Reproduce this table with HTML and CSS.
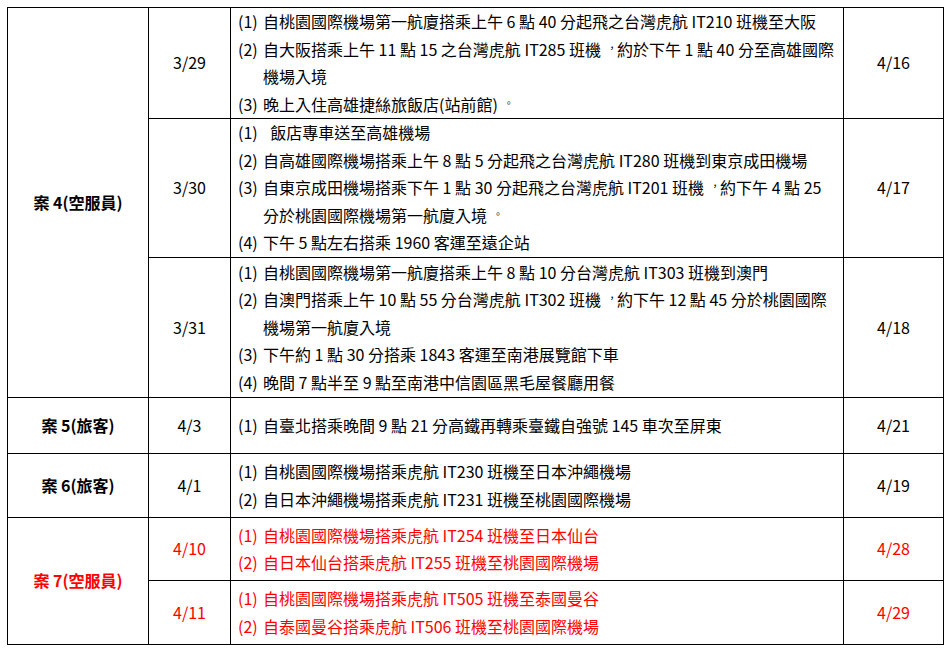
FILE: index.html
```html
<!DOCTYPE html>
<html lang="zh-TW">
<head>
<meta charset="utf-8">
<title>行程表</title>
<link rel="stylesheet" href="styles.css">
</head>
<body>
<div class="page">
<table class="sched">
  <colgroup>
    <col class="c-case"><col class="c-date"><col class="c-plan"><col class="c-end">
  </colgroup>
  <tbody>
    <tr class="r1">
      <td class="case" rowspan="3">案 4(空服員)</td>
      <td class="date">3/29</td>
      <td class="plan">
        <div class="item"><span class="num">(1)</span><span class="txt">自桃園國際機場第一航廈搭乘上午 6 點 40 分起飛之台灣虎航 IT210 班機至大阪</span></div>
        <div class="item"><span class="num">(2)</span><span class="txt">自大阪搭乘上午 11 點 15 之台灣虎航 IT285 班機<span class="cp">，</span>約於下午 1 點 40 分至高雄國際<br>機場入境</span></div>
        <div class="item"><span class="num">(3)</span><span class="txt">晚上入住高雄捷絲旅飯店(站前館)<span class="cp">。</span></span></div>
      </td>
      <td class="date">4/16</td>
    </tr>
    <tr class="r2">
      <td class="date">3/30</td>
      <td class="plan">
        <div class="item"><span class="num">(1)</span><span class="txt">&nbsp;&nbsp;飯店專車送至高雄機場</span></div>
        <div class="item"><span class="num">(2)</span><span class="txt">自高雄國際機場搭乘上午 8 點 5 分起飛之台灣虎航 IT280 班機到東京成田機場</span></div>
        <div class="item"><span class="num">(3)</span><span class="txt">自東京成田機場搭乘下午 1 點 30 分起飛之台灣虎航 IT201 班機<span class="cp">，</span>約下午 4 點 25<br>分於桃園國際機場第一航廈入境<span class="cp">。</span></span></div>
        <div class="item"><span class="num">(4)</span><span class="txt">下午 5 點左右搭乘 1960 客運至遠企站</span></div>
      </td>
      <td class="date">4/17</td>
    </tr>
    <tr class="r3">
      <td class="date">3/31</td>
      <td class="plan">
        <div class="item"><span class="num">(1)</span><span class="txt">自桃園國際機場第一航廈搭乘上午 8 點 10 分台灣虎航 IT303 班機到澳門</span></div>
        <div class="item"><span class="num">(2)</span><span class="txt">自澳門搭乘上午 10 點 55 分台灣虎航 IT302 班機<span class="cp">，</span>約下午 12 點 45 分於桃園國際<br>機場第一航廈入境</span></div>
        <div class="item"><span class="num">(3)</span><span class="txt">下午約 1 點 30 分搭乘 1843 客運至南港展覽館下車</span></div>
        <div class="item"><span class="num">(4)</span><span class="txt">晚間 7 點半至 9 點至南港中信園區黑毛屋餐廳用餐</span></div>
      </td>
      <td class="date">4/18</td>
    </tr>
    <tr class="r4">
      <td class="case">案 5(旅客)</td>
      <td class="date">4/3</td>
      <td class="plan">
        <div class="item"><span class="num">(1)</span><span class="txt">自臺北搭乘晚間 9 點 21 分高鐵再轉乘臺鐵自強號 145 車次至屏東</span></div>
      </td>
      <td class="date">4/21</td>
    </tr>
    <tr class="r5">
      <td class="case">案 6(旅客)</td>
      <td class="date">4/1</td>
      <td class="plan">
        <div class="item"><span class="num">(1)</span><span class="txt">自桃園國際機場搭乘虎航 IT230 班機至日本沖繩機場</span></div>
        <div class="item"><span class="num">(2)</span><span class="txt">自日本沖繩機場搭乘虎航 IT231 班機至桃園國際機場</span></div>
      </td>
      <td class="date">4/19</td>
    </tr>
    <tr class="r6 red">
      <td class="case" rowspan="2">案 7(空服員)</td>
      <td class="date">4/10</td>
      <td class="plan">
        <div class="item"><span class="num">(1)</span><span class="txt">自桃園國際機場搭乘虎航 IT254 班機至日本仙台</span></div>
        <div class="item"><span class="num">(2)</span><span class="txt">自日本仙台搭乘虎航 IT255 班機至桃園國際機場</span></div>
      </td>
      <td class="date">4/28</td>
    </tr>
    <tr class="r7 red">
      <td class="date">4/11</td>
      <td class="plan">
        <div class="item"><span class="num">(1)</span><span class="txt">自桃園國際機場搭乘虎航 IT505 班機至泰國曼谷</span></div>
        <div class="item"><span class="num">(2)</span><span class="txt">自泰國曼谷搭乘虎航 IT506 班機至桃園國際機場</span></div>
      </td>
      <td class="date">4/29</td>
    </tr>
  </tbody>
</table>
</div>
</body>
</html>
```
FILE: styles.css
```css
html, body {
  margin: 0;
  padding: 0;
  background: #ffffff;
}
body {
  font-family: "Noto Sans CJK TC", "Noto Sans", sans-serif;
  font-size: 16px;
  color: #000000;
}
.page {
  padding: 7px 0 0 7px;
}
.sched {
  border-collapse: collapse;
  table-layout: fixed;
  width: 936px;
}
.c-case { width: 141px; }
.c-date { width: 82px; }
.c-plan { width: 613px; }
.c-end { width: 100px; }
.sched td {
  border: 1px solid #000;
  padding: 0;
  vertical-align: middle;
  line-height: 27.5px;
}
.case {
  text-align: center;
  font-weight: bold;
}
.date {
  text-align: center;
}
.plan {
  padding: 0 0 0 7px !important;
}
.item {
  display: flex;
  white-space: nowrap;
}
.num {
  flex: 0 0 25px;
}
.txt {
  white-space: nowrap;
}
.cp {
  display: inline-block;
  box-sizing: border-box;
  width: 16px;
  padding-left: 6px;
  font-size: 10px;
  line-height: 10px;
  vertical-align: 4px;
}
.r1 { height: 110px; }
.r2 { height: 139px; }
.r3 { height: 140px; }
.r4 { height: 56px; }
.r5 { height: 64px; }
.r6 { height: 63px; }
.r7 { height: 64px; }
.red td { color: #ff0000; }
```
